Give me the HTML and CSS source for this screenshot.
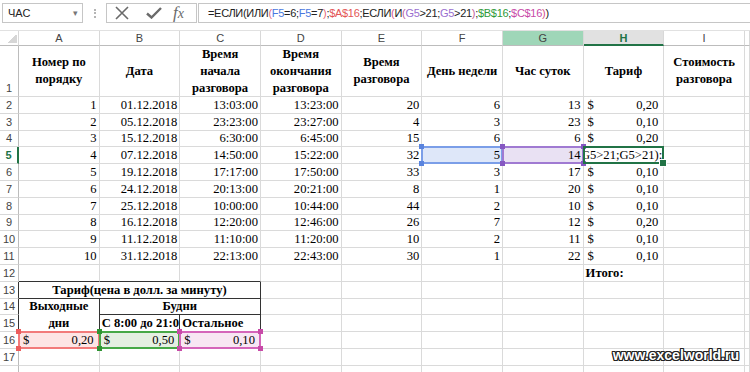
FILE: index.html
```html
<!DOCTYPE html>
<html lang="ru">
<head>
    <meta charset="UTF-8">
    <title>Тариф</title>
    <link rel="stylesheet" href="styles.css">
</head>
<body>
    <div class="toolbar">
        <div class="namebox">ЧАС<span class="drop">&#9662;</span></div>
        <div class="grip"></div>
        <div class="btns">
            <svg width="14" height="14" viewBox="0 0 14 14"><path d="M1 1L13 13M13 1L1 13" stroke="#6a6a6a" stroke-width="1.6" fill="none"/></svg>
            <svg width="16" height="12" viewBox="0 0 16 12"><path d="M1 6.5L5.5 10.5L15 1" stroke="#6a6a6a" stroke-width="2.4" fill="none"/></svg>
            <span class="fx">f<i>x</i></span>
        </div>
        <div class="formula">=ЕСЛИ(ИЛИ<span class="p1">(</span><span class="rb">F5</span>=6;<span class="rb">F5</span>=7<span class="p1">)</span>;<span class="rr">$A$16</span>;ЕСЛИ<span class="p2">(</span>И<span class="p3">(</span><span class="rp">G5</span>&gt;21;<span class="rp">G5</span>&gt;21<span class="p3">)</span>;<span class="rg">$B$16</span>;<span class="rm">$C$16</span><span class="p2">)</span>)</div>
    </div>

    <div class="sheet">
        <!-- column headers -->
        <div class="ch corner"></div>
        <div class="ch">A</div><div class="ch">B</div><div class="ch">C</div><div class="ch">D</div>
        <div class="ch">E</div><div class="ch">F</div><div class="ch ch-sel">G</div><div class="ch ch-act">H</div>
        <div class="ch">I</div><div class="ch"></div>

        <!-- row 1 -->
        <div class="rh rh-low">1</div>
        <div class="c hd">Номер по<br>порядку</div>
        <div class="c hd">Дата</div>
        <div class="c hd">Время<br>начала<br>разговора</div>
        <div class="c hd">Время<br>окончания<br>разговора</div>
        <div class="c hd">Время<br>разговора</div>
        <div class="c hd">День недели</div>
        <div class="c hd">Час суток</div>
        <div class="c hd">Тариф</div>
        <div class="c hd">Стоимость<br>разговора</div>
        <div class="c"></div>

        <div class="rh">2</div>
        <div class="c n">1</div><div class="c n">01.12.2018</div><div class="c n">13:03:00</div><div class="c n">13:23:00</div>
        <div class="c n">20</div><div class="c n">6</div><div class="c n">13</div>
        <div class="c acc"><span>$</span><span>0,20</span></div><div class="c"></div><div class="c"></div>

        <div class="rh">3</div>
        <div class="c n">2</div><div class="c n">05.12.2018</div><div class="c n">23:23:00</div><div class="c n">23:27:00</div>
        <div class="c n">4</div><div class="c n">3</div><div class="c n">23</div>
        <div class="c acc"><span>$</span><span>0,10</span></div><div class="c"></div><div class="c"></div>

        <div class="rh">4</div>
        <div class="c n">3</div><div class="c n">15.12.2018</div><div class="c n">6:30:00</div><div class="c n">6:45:00</div>
        <div class="c n">15</div><div class="c n">6</div><div class="c n">6</div>
        <div class="c acc"><span>$</span><span>0,20</span></div><div class="c"></div><div class="c"></div>

        <div class="rh rh-act">5</div>
        <div class="c n">4</div><div class="c n">07.12.2018</div><div class="c n">14:50:00</div><div class="c n">15:22:00</div>
        <div class="c n">32</div><div class="c n hl hl-blue">5</div><div class="c n hl hl-purple">14</div>
        <div class="c active"><div class="edit"><span>=ЕСЛИ(ИЛИ(F5=6;F5=7);$A$16;ЕСЛИ(И(G5&gt;21;G5&gt;21);</span></div></div>
        <div class="c"></div><div class="c"></div>

        <div class="rh">6</div>
        <div class="c n">5</div><div class="c n">19.12.2018</div><div class="c n">17:17:00</div><div class="c n">17:50:00</div>
        <div class="c n">33</div><div class="c n">3</div><div class="c n">17</div>
        <div class="c acc"><span>$</span><span>0,10</span></div><div class="c"></div><div class="c"></div>

        <div class="rh">7</div>
        <div class="c n">6</div><div class="c n">24.12.2018</div><div class="c n">20:13:00</div><div class="c n">20:21:00</div>
        <div class="c n">8</div><div class="c n">1</div><div class="c n">20</div>
        <div class="c acc"><span>$</span><span>0,10</span></div><div class="c"></div><div class="c"></div>

        <div class="rh">8</div>
        <div class="c n">7</div><div class="c n">25.12.2018</div><div class="c n">10:00:00</div><div class="c n">10:44:00</div>
        <div class="c n">44</div><div class="c n">2</div><div class="c n">10</div>
        <div class="c acc"><span>$</span><span>0,10</span></div><div class="c"></div><div class="c"></div>

        <div class="rh">9</div>
        <div class="c n">8</div><div class="c n">16.12.2018</div><div class="c n">12:20:00</div><div class="c n">12:46:00</div>
        <div class="c n">26</div><div class="c n">7</div><div class="c n">12</div>
        <div class="c acc"><span>$</span><span>0,20</span></div><div class="c"></div><div class="c"></div>

        <div class="rh">10</div>
        <div class="c n">9</div><div class="c n">11.12.2018</div><div class="c n">11:10:00</div><div class="c n">11:20:00</div>
        <div class="c n">10</div><div class="c n">2</div><div class="c n">11</div>
        <div class="c acc"><span>$</span><span>0,10</span></div><div class="c"></div><div class="c"></div>

        <div class="rh">11</div>
        <div class="c n">10</div><div class="c n">31.12.2018</div><div class="c n">22:13:00</div><div class="c n">22:43:00</div>
        <div class="c n">30</div><div class="c n">1</div><div class="c n">22</div>
        <div class="c acc"><span>$</span><span>0,10</span></div><div class="c"></div><div class="c"></div>

        <div class="rh">12</div>
        <div class="c bb"></div><div class="c bb"></div><div class="c bb"></div><div class="c"></div>
        <div class="c"></div><div class="c"></div><div class="c"></div>
        <div class="c b">Итого:</div><div class="c"></div><div class="c"></div>

        <!-- tariff table -->
        <div class="rh br">13</div>
        <div class="c b ctr span3 bb br">Тариф(цена в долл. за минуту)</div>
        <div class="c"></div><div class="c"></div><div class="c"></div><div class="c"></div>
        <div class="c"></div><div class="c"></div><div class="c"></div>

        <div class="rh br">14</div>
        <div class="c b wrap rows2 bb br">Выходные<br>дни</div>
        <div class="c b ctr span2 bb br">Будни</div>
        <div class="c"></div><div class="c"></div><div class="c"></div><div class="c"></div>
        <div class="c"></div><div class="c"></div><div class="c"></div>

        <div class="rh br">15</div>
        <div class="c b bb br">С 8:00 до 21:00</div>
        <div class="c b bb br">Остальное</div>
        <div class="c"></div><div class="c"></div><div class="c"></div><div class="c"></div>
        <div class="c"></div><div class="c"></div><div class="c"></div>

        <div class="rh">16</div>
        <div class="c acc hl hl-red"><span>$</span><span>0,20</span></div>
        <div class="c acc hl hl-green"><span>$</span><span>0,50</span></div>
        <div class="c acc hl hl-pink"><span>$</span><span>0,10</span></div>
        <div class="c"></div><div class="c"></div><div class="c"></div><div class="c"></div>
        <div class="c"></div><div class="c"></div><div class="c"></div>

        <div class="rh">17</div>
        <div class="c"></div><div class="c"></div><div class="c"></div><div class="c"></div><div class="c"></div>
        <div class="c"></div><div class="c"></div><div class="c"></div><div class="c"></div><div class="c"></div>

        <div class="rh"></div>
        <div class="c"></div><div class="c"></div><div class="c"></div><div class="c"></div><div class="c"></div>
        <div class="c"></div><div class="c"></div><div class="c"></div><div class="c"></div><div class="c"></div>
    </div>

    <div class="watermark">www.excelworld.ru</div>
</body>
</html>
```

FILE: styles.css
```css
* {
    box-sizing: border-box;
}
html, body {
    margin: 0;
    height: 100%;
    overflow: hidden;
    background: #fff;
}
body {
    font-family: "Liberation Sans", Arial, sans-serif;
    position: relative;
}

/* formula bar */
.toolbar {
    height: 31px;
    display: flex;
    align-items: flex-start;
    padding: 3px 0 0 2px;
    border-bottom: 1px solid #e1e1e1;
}
.namebox {
    width: 81px;
    height: 20px;
    border: 1px solid #c6c6c6;
    display: flex;
    align-items: center;
    justify-content: space-between;
    padding: 0 4px 0 5px;
    font-size: 11px;
    color: #222;
}
.drop {
    font-size: 9px;
    color: #777;
}
.grip {
    width: 2px;
    height: 9px;
    margin: 6px 10px 0 11px;
    border-left: 2px dotted #b5b5b5;
}
.btns {
    width: 91px;
    height: 20px;
    border: 1px solid #c6c6c6;
    display: flex;
    align-items: center;
    padding-left: 5px;
}
.btns svg:first-child {
    margin-left: 3px;
}
.btns svg:nth-child(2) {
    margin-left: 17px;
}
.fx {
    margin-left: 11px;
    font-family: "Liberation Serif", serif;
    font-style: italic;
    font-size: 17px;
    color: #6a6a6a;
    line-height: 18px;
}
.fx i {
    font-size: 14px;
}
.formula {
    flex: 1;
    height: 20px;
    margin-left: 1px;
    border: 1px solid #c6c6c6;
    border-right: none;
    padding-left: 9px;
    font-size: 11px;
    letter-spacing: -0.3px;
    line-height: 18px;
    color: #222;
    white-space: nowrap;
}
.p1 { color: #e66a78; }
.p2 { color: #d4528c; }
.p3 { color: #c0609a; }
.rb { color: #4a78e0; }
.rr { color: #e35656; }
.rp { color: #9a6ed0; }
.rg { color: #2f9a3a; }
.rm { color: #c84aa8; }

/* grid */
.sheet {
    display: grid;
    grid-template-columns: 19px repeat(9, 80.67px) 1fr;
    grid-template-rows: 15px 51px repeat(17, 16.8px);
}
.ch {
    font-size: 11px;
    color: #444;
    text-align: center;
    line-height: 14px;
    border-right: 1px solid #d8d8d8;
    border-bottom: 1px solid #bcbcbc;
}
.corner {
    background: linear-gradient(135deg, transparent 55%, #d6d6d6 55%) no-repeat 7px 2px / 10px 10px;
}
.ch-sel {
    background: #9fd6b8;
}
.ch-act {
    background: #e1e1e1;
    color: #217346;
    font-weight: bold;
    border-bottom: 2px solid #217346;
}
.rh {
    font-size: 11px;
    color: #444;
    display: flex;
    align-items: center;
    justify-content: center;
    line-height: 14px;
    border-right: 1px solid #bcbcbc;
    border-bottom: 1px solid #d8d8d8;
}
.rh-low {
    align-items: flex-end;
    padding-bottom: 1px;
}
.rh-act {
    color: #217346;
    font-weight: bold;
    border-right: 2px solid #217346;
}

.c {
    font-family: "Liberation Serif", "Times New Roman", serif;
    font-size: 12.6px;
    line-height: 15px;
    color: #000;
    display: flex;
    align-items: flex-end;
    padding: 0 2px 0 2px;
    white-space: nowrap;
    overflow: hidden;
    border-right: 1px solid #dadada;
    border-bottom: 1px solid #dadada;
}
.n {
    justify-content: flex-end;
}
.hd {
    font-weight: bold;
    white-space: normal;
    text-align: center;
    justify-content: center;
    align-items: center;
    line-height: 17px;
}
.acc {
    justify-content: space-between;
    padding: 0 5px 0 4px;
}
.b {
    font-weight: bold;
}
.ctr {
    justify-content: center;
}
.wrap {
    white-space: normal;
    text-align: center;
    justify-content: center;
    align-items: center;
    line-height: 17px;
}
.span3 {
    grid-column: span 3;
}
.span2 {
    grid-column: span 2;
}
.rows2 {
    grid-row: span 2;
}
.bb {
    border-bottom-color: #333;
}
.br {
    border-right-color: #333;
}

/* reference highlights */
.hl {
    position: relative;
    overflow: visible;
    background: var(--bg);
}
.hl::before {
    content: "";
    position: absolute;
    top: -1px;
    left: -1px;
    right: -1px;
    bottom: -1px;
    border: 2px solid var(--hc);
}
.hl::after {
    content: "";
    position: absolute;
    top: -3px;
    left: -3px;
    right: -3px;
    bottom: -3px;
    background:
        linear-gradient(var(--hd), var(--hd)) left top / 5px 5px no-repeat,
        linear-gradient(var(--hd), var(--hd)) right top / 5px 5px no-repeat,
        linear-gradient(var(--hd), var(--hd)) left bottom / 5px 5px no-repeat,
        linear-gradient(var(--hd), var(--hd)) right bottom / 5px 5px no-repeat;
}
.hl-blue { --bg: #dee7f9; --hc: #7b9ee8; --hd: #5a84de; }
.hl-purple { --bg: #e9e1f3; --hc: #a07ad2; --hd: #8658c2; }
.hl-red { --bg: #fde5e5; --hc: #f27b7b; --hd: #ec5c5c; }
.hl-green { --bg: #e5efe2; --hc: #47a847; --hd: #2f9432; }
.hl-pink { --bg: #f8e6f3; --hc: #d565ba; --hd: #c84aa8; }

.active {
    position: relative;
    overflow: visible;
    padding: 0;
}
.active::before {
    content: "";
    position: absolute;
    top: -1px;
    left: -1px;
    right: -1px;
    bottom: -1px;
    border: 2px solid #217346;
}
.active::after {
    content: "";
    position: absolute;
    right: -4px;
    bottom: -4px;
    width: 6px;
    height: 6px;
    background: #217346;
    border: 1px solid #fff;
}
.edit {
    width: 100%;
    height: 100%;
    display: flex;
    align-items: flex-end;
    justify-content: flex-end;
    overflow: hidden;
    padding-right: 1px;
}

.watermark {
    position: absolute;
    right: 11px;
    bottom: 9px;
    font-family: "Liberation Sans", Arial, sans-serif;
    font-weight: bold;
    font-size: 14px;
    color: #fff;
    text-shadow: 1px 0 0 #222, -1px 0 0 #222, 0 1px 0 #222, 0 -1px 0 #222,
        1px 1px 0 #222, -1px -1px 0 #222, 1px -1px 0 #222, -1px 1px 0 #222;
}
```
